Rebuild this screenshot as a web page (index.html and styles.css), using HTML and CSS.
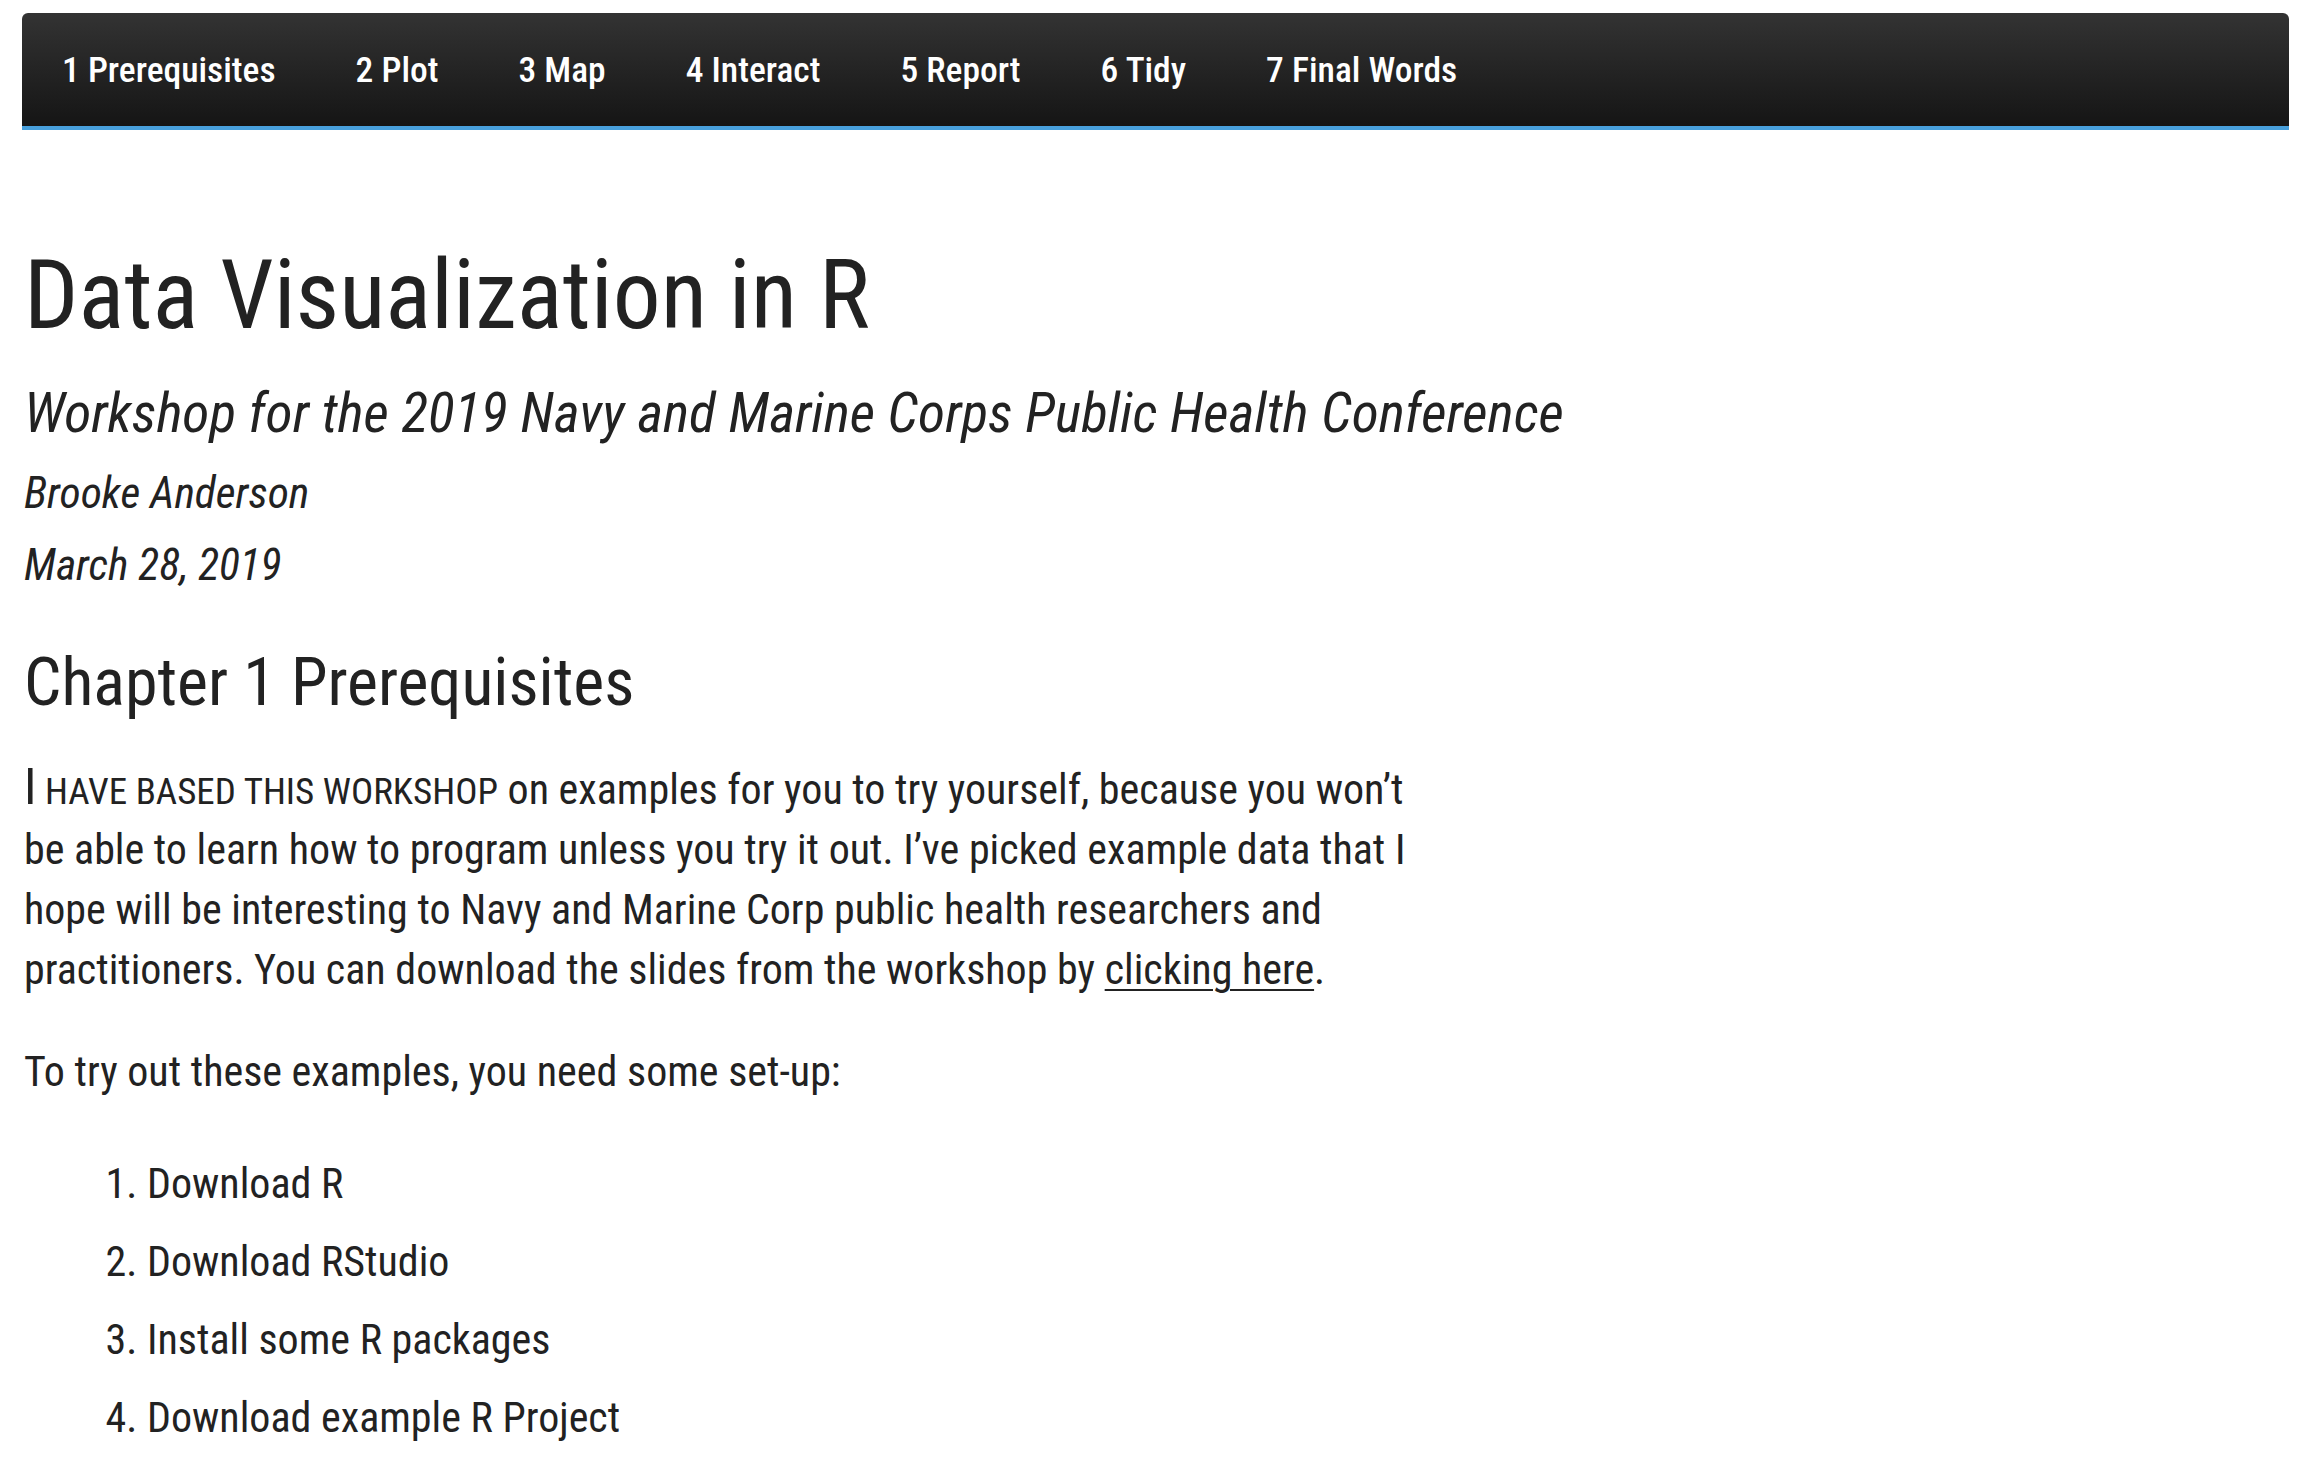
FILE: index.html
```html
<!DOCTYPE html>
<html lang="en">
<head>
<meta charset="utf-8">
<title>Data Visualization in R</title>
<link rel="stylesheet" href="styles.css">
</head>
<body>
<nav class="navbar">
  <a class="nav-link" href="#">1 Prerequisites</a>
  <a class="nav-link" href="#">2 Plot</a>
  <a class="nav-link" href="#">3 Map</a>
  <a class="nav-link" href="#">4 Interact</a>
  <a class="nav-link" href="#">5 Report</a>
  <a class="nav-link" href="#">6 Tidy</a>
  <a class="nav-link" href="#">7 Final Words</a>
</nav>
<main class="content">
  <h1 class="title">Data Visualization in R</h1>
  <p class="subtitle">Workshop for the 2019 Navy and Marine Corps Public Health Conference</p>
  <p class="author">Brooke Anderson</p>
  <p class="date">March 28, 2019</p>
  <h2 class="chapter">Chapter 1 Prerequisites</h2>
  <p class="para"><span class="newthought"><span class="nt-initial">I</span> have based this workshop</span> on examples for you to try yourself, because you won’t be able to learn how to program unless you try it out. I’ve picked example data that I hope will be interesting to Navy and Marine Corp public health researchers and practitioners. You can download the slides from the workshop by <a class="link" href="#">clicking here</a>.</p>
  <p class="para second">To try out these examples, you need some set-up:</p>
  <ol class="steps">
    <li>Download R</li>
    <li>Download RStudio</li>
    <li>Install some R packages</li>
    <li>Download example R Project</li>
  </ol>
</main>
</body>
</html>
```

FILE: styles.css
```css
html, body {
  margin: 0;
  padding: 0;
  background: #ffffff;
}

body {
  padding: 13px 27px 0 22px;
  font-family: "Roboto Condensed", "Roboto", "Liberation Sans Narrow", sans-serif;
  font-stretch: 75%;
  color: #222222;
}

.navbar {
  display: flex;
  align-items: center;
  height: 113px;
  background: linear-gradient(to bottom, #333333 0%, #151515 100%);
  border-bottom: 4px solid #48a0dc;
  border-radius: 6px 6px 0 0;
}

.nav-link {
  padding: 0 40px;
  color: #ffffff;
  text-decoration: none;
  font-size: 35.5px;
  font-weight: 500;
  line-height: 40px;
}

.content {
  padding-left: 2px;
}

.title {
  margin: 117px 0 0 0;
  font-size: 95.5px;
  font-weight: 400;
  line-height: 97px;
}

.subtitle {
  margin: 34px 0 0 0;
  font-size: 55.5px;
  font-style: italic;
  line-height: 72px;
}

.author, .date {
  margin: 0;
  font-size: 43.5px;
  font-style: italic;
  line-height: 72px;
}

.author {
  margin-top: 8px;
}

.chapter {
  margin: 45px 0 0 0;
  font-size: 66px;
  font-weight: 400;
  line-height: 72px;
}

.para {
  margin: 41px 0 0 0;
  width: 1395px;
  font-size: 42px;
  line-height: 60px;
}

.para.second {
  margin-top: 42px;
}

.newthought {
  text-transform: uppercase;
  font-size: 37px;
  line-height: 1;
}

.nt-initial {
  font-size: 50px;
}

.link {
  color: inherit;
  text-decoration: underline;
  text-underline-offset: 5px;
  text-decoration-thickness: 2px;
}

.steps {
  margin: 52px 0 0 0;
  padding-left: 123px;
  font-size: 42px;
  line-height: 60px;
}

.steps li {
  margin-bottom: 18px;
}
```
